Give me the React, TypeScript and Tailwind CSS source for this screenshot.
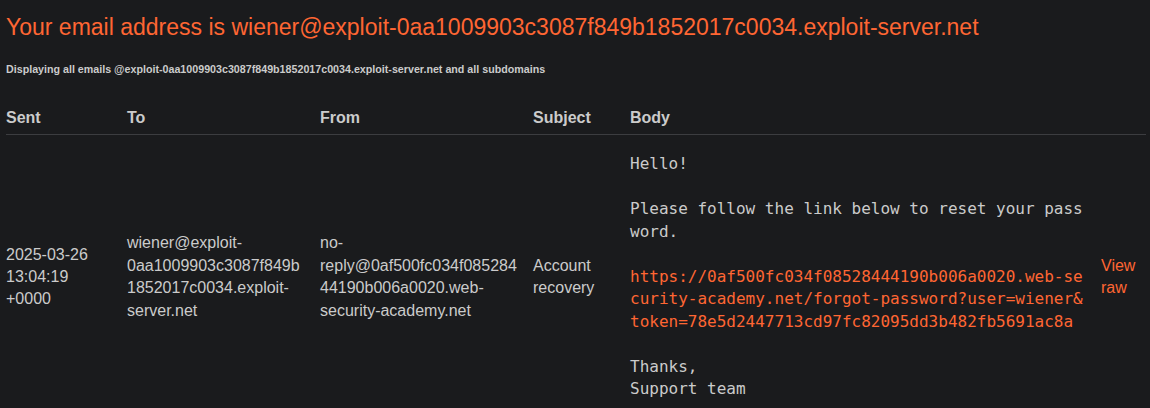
const emails = [
    {
        sent: '2025-03-26 13:04:19 +0000',
        to: 'wiener@exploit-0aa1009903c3087f849b1852017c0034.exploit-server.net',
        from: 'no-reply@0af500fc034f08528444190b006a0020.web-security-academy.net',
        subject: 'Account recovery',
        link: 'https://0af500fc034f08528444190b006a0020.web-security-academy.net/forgot-password?user=wiener&token=78e5d2447713cd97fc82095dd3b482fb5691ac8a',
    },
];

export default function App() {
    return (
        <div className="min-h-screen bg-[#1a1b1d] text-[#cbcbcb] font-['Liberation_Sans',Arial,sans-serif] px-[6px] pt-[12px]">
            <h1 className="text-[23px] leading-[30px] text-[#ff6633]">
                Your email address is wiener@exploit-0aa1009903c3087f849b1852017c0034.exploit-server.net
            </h1>
            <h4 className="mt-[20px] text-[10.7px] leading-[14px] font-bold">
                Displaying all emails @exploit-0aa1009903c3087f849b1852017c0034.exploit-server.net and all subdomains
            </h4>
            <table className="mt-[31px] w-[1140px] table-fixed border-collapse text-[16px] leading-[22.4px]">
                <colgroup>
                    <col className="w-[121px]" />
                    <col className="w-[193px]" />
                    <col className="w-[213px]" />
                    <col className="w-[97px]" />
                    <col className="w-[471px]" />
                    <col className="w-[45px]" />
                </colgroup>
                <thead>
                    <tr className="border-b border-[#3c3d40] text-left">
                        <th className="pb-[5px] font-bold">Sent</th>
                        <th className="pb-[5px] font-bold">To</th>
                        <th className="pb-[5px] font-bold">From</th>
                        <th className="pb-[5px] font-bold">Subject</th>
                        <th className="pb-[5px] font-bold">Body</th>
                        <th className="pb-[5px]"></th>
                    </tr>
                </thead>
                <tbody>
                    {emails.map((email) => (
                        <tr key={email.sent} className="align-middle">
                            <td className="pr-[20px]">{email.sent}</td>
                            <td className="pr-[15px] break-words">{email.to}</td>
                            <td className="pr-[13px] break-words">{email.from}</td>
                            <td className="pr-[8px]">{email.subject}</td>
                            <td className="pr-[16px] pt-[18px] pb-[18px]">
                                <pre className="font-['DejaVu_Sans_Mono',monospace] text-[16px] leading-[22.5px] whitespace-pre-wrap break-all">
{`Hello!

Please follow the link below to reset your password.

`}<span className="text-[#ff6633]">{email.link}</span>{`

Thanks,
Support team`}
                                </pre>
                            </td>
                            <td className="text-[#ff6633]">View raw</td>
                        </tr>
                    ))}
                </tbody>
            </table>
        </div>
    );
}
